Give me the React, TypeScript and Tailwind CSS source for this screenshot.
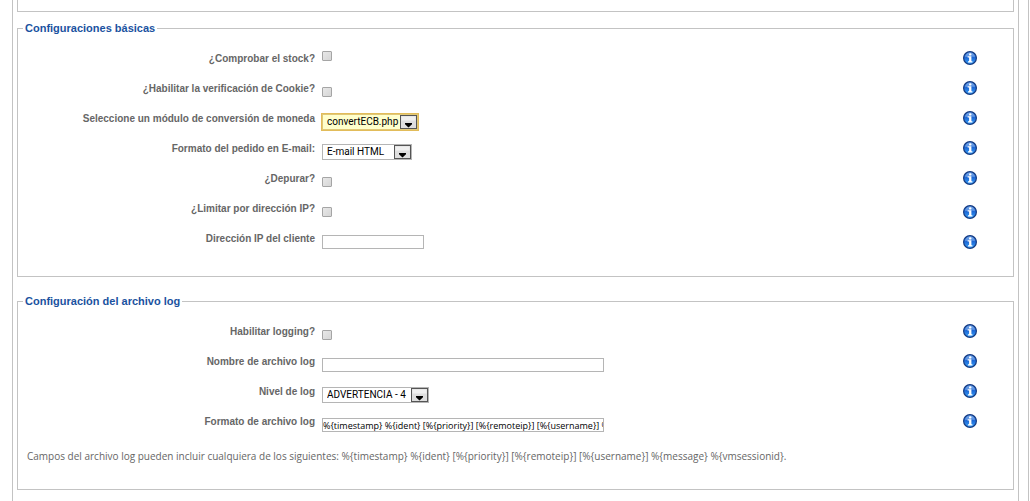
import type { ReactNode } from "react";

const LOG_FIELDS =
    "%{timestamp} %{ident} [%{priority}] [%{remoteip}] [%{username}] %{message} %{vmsessionid}";

export default function App() {
    return (
        <div className="mr-px border-r border-[#c3c3c3] bg-white pr-[9px] pl-3 font-['Liberation_Sans',Arial,sans-serif] text-[10px] text-[#666]">
            <div className="border-x border-[#c3c3c3] px-1 pb-3">
                {/* End of the previous section */}
                <div className="h-3 border-x border-b border-[#c3c3c3]" />

                <Section title="Configuraciones básicas" className="mt-2 pb-[19px]">
                    <Row id="check_stock" label="¿Comprobar el stock?" controlClass="pb-3">
                        <Checkbox id="check_stock" />
                    </Row>
                    <Row id="cookie_check" label="¿Habilitar la verificación de Cookie?">
                        <Checkbox id="cookie_check" />
                    </Row>
                    <Row id="currency_module" label="Seleccione un módulo de conversión de moneda">
                        <Select id="currency_module" options={["convertECB.php"]} width="w-24" highlighted />
                    </Row>
                    <Row id="mail_format" label="Formato del pedido en E-mail:">
                        <Select id="mail_format" options={["E-mail HTML", "E-mail texto"]} width="w-[90px]" />
                    </Row>
                    <Row id="debug" label="¿Depurar?">
                        <Checkbox id="debug" />
                    </Row>
                    <Row id="limit_ip" label="¿Limitar por dirección IP?" iconClass="pb-0">
                        <Checkbox id="limit_ip" />
                    </Row>
                    <Row id="client_ip" label="Dirección IP del cliente" iconClass="pb-0">
                        <TextInput id="client_ip" width="w-[102px]" />
                    </Row>
                </Section>

                <Section title="Configuración del archivo log" className="mt-4 pb-[25px]">
                    <Row id="log_enabled" label="Habilitar logging?">
                        <Checkbox id="log_enabled" />
                    </Row>
                    <Row id="log_file" label="Nombre de archivo log">
                        <TextInput id="log_file" width="w-[282px]" />
                    </Row>
                    <Row id="log_level" label="Nivel de log">
                        <Select id="log_level" options={["ADVERTENCIA - 4"]} width="w-[107px]" />
                    </Row>
                    <Row id="log_format" label="Formato de archivo log">
                        <TextInput id="log_format" width="w-[282px]" value={LOG_FIELDS} />
                    </Row>
                    <p className="px-[9px] pt-2 font-['Open_Sans',sans-serif] leading-4">
                        Campos del archivo log pueden incluir cualquiera de los siguientes: {LOG_FIELDS}.
                    </p>
                </Section>
            </div>
        </div>
    );
}

function Section({ title, className, children }: { title: string; className: string; children: ReactNode }) {
    return (
        <fieldset className={`border border-[#c3c3c3] pt-[11px] ${className}`}>
            <legend className="ml-[5px] px-0.5 text-[11px] leading-4 font-bold text-[#1a52a0]">{title}</legend>
            {children}
        </fieldset>
    );
}

function Row({
    id,
    label,
    controlClass = "",
    iconClass = "pb-2",
    children,
}: {
    id: string;
    label: string;
    controlClass?: string;
    iconClass?: string;
    children: ReactNode;
}) {
    return (
        <div className="flex h-[30px] items-stretch">
            <label htmlFor={id} className="flex w-[297px] shrink-0 items-center justify-end pb-2 font-bold">
                {label}
            </label>
            <div className={`ml-[7px] flex flex-1 items-center ${controlClass}`}>{children}</div>
            <div className={`mr-9 flex items-center ${iconClass}`}>
                <InfoIcon />
            </div>
        </div>
    );
}

function Checkbox({ id }: { id: string }) {
    return (
        <input
            id={id}
            type="checkbox"
            className="size-[10px] appearance-none rounded-[1px] border border-[#a5a5a5] bg-linear-to-br from-[#e8e8e8] to-[#d6d6d6]"
        />
    );
}

function TextInput({ id, width, value }: { id: string; width: string; value?: string }) {
    return (
        <input
            id={id}
            type="text"
            defaultValue={value}
            className={`h-[14px] border border-[#b5b5b5] bg-white font-['Open_Sans',sans-serif] text-[9px] leading-3 text-black ${width}`}
        />
    );
}

function Select({
    id,
    options,
    width,
    highlighted = false,
}: {
    id: string;
    options: string[];
    width: string;
    highlighted?: boolean;
}) {
    const look = highlighted
        ? "border-[#e0c878] bg-[#ffffcc] ring-1 ring-[#e2bc5a]"
        : "border-[#b5b5b5] bg-white";

    return (
        <div className={`relative ${width}`}>
            <select
                id={id}
                className={`block h-4 w-full appearance-none border pr-4 pl-1 font-[Roboto,sans-serif] leading-3 text-black outline-none ${look}`}
            >
                {options.map((o) => (
                    <option key={o}>{o}</option>
                ))}
            </select>
            {/* Arrow button */}
            <svg
                className="pointer-events-none absolute inset-y-px right-px my-auto"
                width="17"
                height="14"
                viewBox="0 0 17 14"
            >
                <rect x="0.5" y="0.5" width="16" height="13" fill="#dedede" stroke="#555" />
                <path d="M1.5 1.5h14v4h-14z" fill="#f0f0f0" />
                <path d="M5 8h7v1.2L8.5 12.5 5 9.2z" fill="#000" />
            </svg>
        </div>
    );
}

function InfoIcon() {
    return (
        <svg width="14" height="14" viewBox="0 0 14 14" aria-hidden="true">
            <defs>
                <linearGradient id="info-fill" x1="0" y1="0" x2="0" y2="1">
                    <stop offset="0" stopColor="#4a8ee6" />
                    <stop offset="0.45" stopColor="#1c66d4" />
                    <stop offset="1" stopColor="#3aa4fc" />
                </linearGradient>
            </defs>
            <circle cx="7" cy="7" r="6.4" fill="url(#info-fill)" stroke="#153a80" strokeWidth="1.2" />
            <path d="M2 6.2a5 4.6 0 0 1 10 0C9 5.2 5 5.4 2 6.2z" fill="#fff" opacity="0.25" />
            <circle cx="7.2" cy="3.4" r="1.2" fill="#fff" />
            <path d="M4.6 5.2h3.8v5h1v1.2H5v-1.2h1.1V6.4H4.6z" fill="#fff" />
        </svg>
    );
}
